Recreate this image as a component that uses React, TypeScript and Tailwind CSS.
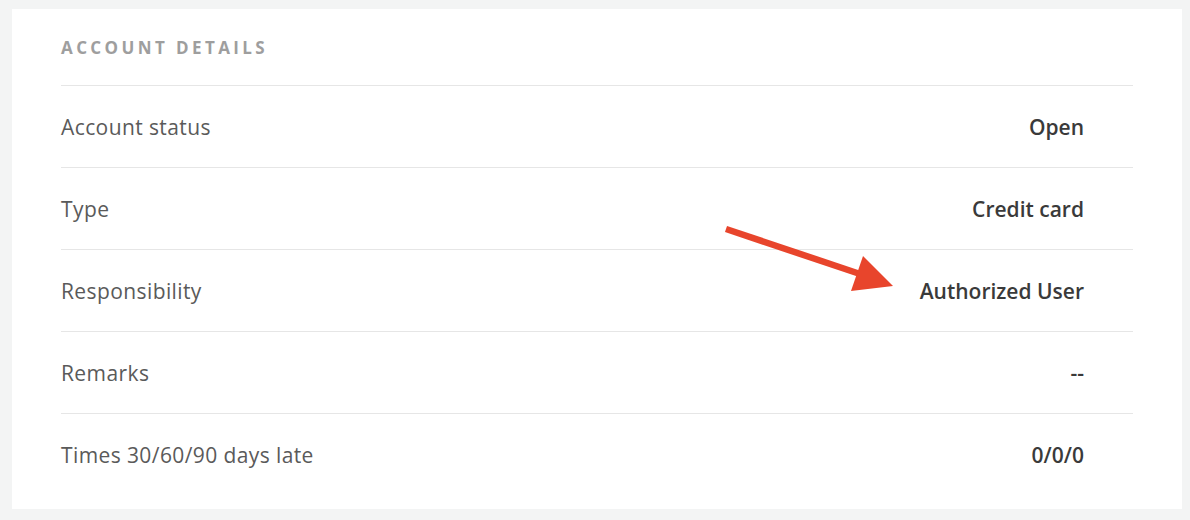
const rows: { label: string; value: string }[] = [
  { label: "Account status", value: "Open" },
  { label: "Type", value: "Credit card" },
  { label: "Responsibility", value: "Authorized User" },
  { label: "Remarks", value: "--" },
  { label: "Times 30/60/90 days late", value: "0/0/0" },
];

function Arrow() {
  // annotation arrow drawn over the card
  return (
    <svg
      className="pointer-events-none absolute left-0 top-0"
      width="1190"
      height="520"
      viewBox="0 0 1190 520"
    >
      <line x1="726" y1="229" x2="866" y2="276" stroke="#e8452c" strokeWidth="6.5" strokeLinecap="butt" />
      <polygon points="863,256 893,286 851,291" fill="#e8452c" />
    </svg>
  );
}

export default function App() {
  return (
    <div
      className="relative h-[520px] w-[1190px] bg-[#f3f4f4] pl-[12px] pt-[9px]"
      style={{ fontFamily: "'Open Sans', Lato, sans-serif" }}
    >
      <div className="h-[500px] w-[1170px] bg-white px-[49px]">
        <div className="flex h-[77px] items-center border-b border-[#e6e6e6] pt-[2px]">
          <h2 className="text-[17px] font-bold tracking-[3.4px] text-[#9e9e9e]">ACCOUNT DETAILS</h2>
        </div>
        {rows.map((row, i) => (
          <div
            key={row.label}
            className={
              "flex h-[82px] items-center justify-between pr-[49px] pt-[2px] " +
              (i < rows.length - 1 ? "border-b border-[#e6e6e6]" : "")
            }
          >
            <span className="text-[21px] tracking-[0.4px] text-[#5a5a5a]">{row.label}</span>
            <span className="text-[21px] font-semibold text-[#3a3a3a]">{row.value}</span>
          </div>
        ))}
      </div>
      <Arrow />
    </div>
  );
}
